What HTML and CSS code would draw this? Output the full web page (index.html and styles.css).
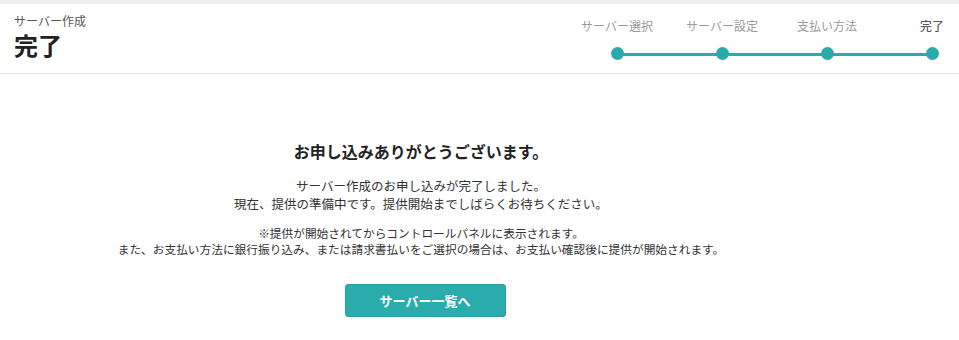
FILE: index.html
```html
<!DOCTYPE html>
<html lang="ja">
<head>
  <meta charset="UTF-8" />
  <meta name="viewport" content="width=device-width, initial-scale=1.0"/>
  <title>サーバー作成 - 完了</title>
  <link rel="stylesheet" href="styles.css">
</head>
<body>

  <!-- Page header with steps -->
  <header class="page-header">
    <div class="page-title">
      <span class="page-sub">サーバー作成</span>
      <h1>完了</h1>
    </div>

    <ol class="steps">
      <li class="step"><span class="step-label">サーバー選択</span><span class="dot"></span></li>
      <li class="step"><span class="step-label">サーバー設定</span><span class="dot"></span></li>
      <li class="step"><span class="step-label">支払い方法</span><span class="dot"></span></li>
      <li class="step current"><span class="step-label">完了</span><span class="dot"></span></li>
    </ol>
  </header>

  <!-- Completion message -->
  <main class="complete">
    <h2>お申し込みありがとうございます。</h2>
    <p class="lead">
      サーバー作成のお申し込みが完了しました。<br>
      現在、提供の準備中です。提供開始までしばらくお待ちください。
    </p>
    <p class="note">
      ※提供が開始されてからコントロールパネルに表示されます。<br>
      また、お支払い方法に銀行振り込み、または請求書払いをご選択の場合は、お支払い確認後に提供が開始されます。
    </p>
    <a href="#" class="btn">サーバー一覧へ</a>
  </main>

</body>
</html>
```

FILE: styles.css
```css
/* Reset & base */
* { box-sizing: border-box; margin: 0; padding: 0; }
body {
  font-family: "Noto Sans CJK JP", "Noto Sans", sans-serif;
  background: #fff;
  color: #333;
}

/* Header */
.page-header {
  display: flex;
  justify-content: space-between;
  align-items: flex-start;
  height: 74px;
  padding: 8px 14px 0 14px;
  border-top: 4px solid #eeeeee;
  border-bottom: 1px solid #e3e3e3;
}
.page-sub {
  display: block;
  font-size: 12px;
  line-height: 18px;
  color: #555;
}
.page-title h1 {
  font-size: 24px;
  line-height: 30px;
  font-weight: 700;
  color: #222;
}

/* Steps */
.steps {
  position: relative;
  display: flex;
  gap: 79px;
  list-style: none;
  margin-top: 5px;
}
.steps::before {
  content: "";
  position: absolute;
  left: 13px; right: 13px;
  top: 36px;
  height: 3px;
  background: #2aabab;
}
.step {
  width: 26px;
  display: flex;
  flex-direction: column;
  align-items: center;
}
.step-label {
  white-space: nowrap;
  font-size: 12px;
  line-height: 18px;
  color: #999;
}
.step.current .step-label { color: #333; }
.dot {
  position: relative;
  width: 13px; height: 13px;
  margin-top: 12px;
  border-radius: 50%;
  background: #2aabab;
}

/* Completion message */
.complete {
  padding: 65px 117px 0 0;
  text-align: center;
}
.complete h2 {
  font-size: 16px;
  line-height: 24px;
  font-weight: 700;
  color: #222;
}
.lead {
  margin-top: 14px;
  font-size: 12.5px;
  line-height: 18px;
}
.note {
  margin-top: 12px;
  font-size: 11.7px;
  line-height: 16px;
}
.btn {
  display: inline-block;
  margin: 27px 0 0 8px;
  width: 161px;
  height: 33px;
  line-height: 31px;
  border: 1px solid #26a0a0;
  border-radius: 3px;
  background: #2aacac;
  color: #fff;
  font-size: 13px;
  font-weight: 600;
  text-decoration: none;
}
```
